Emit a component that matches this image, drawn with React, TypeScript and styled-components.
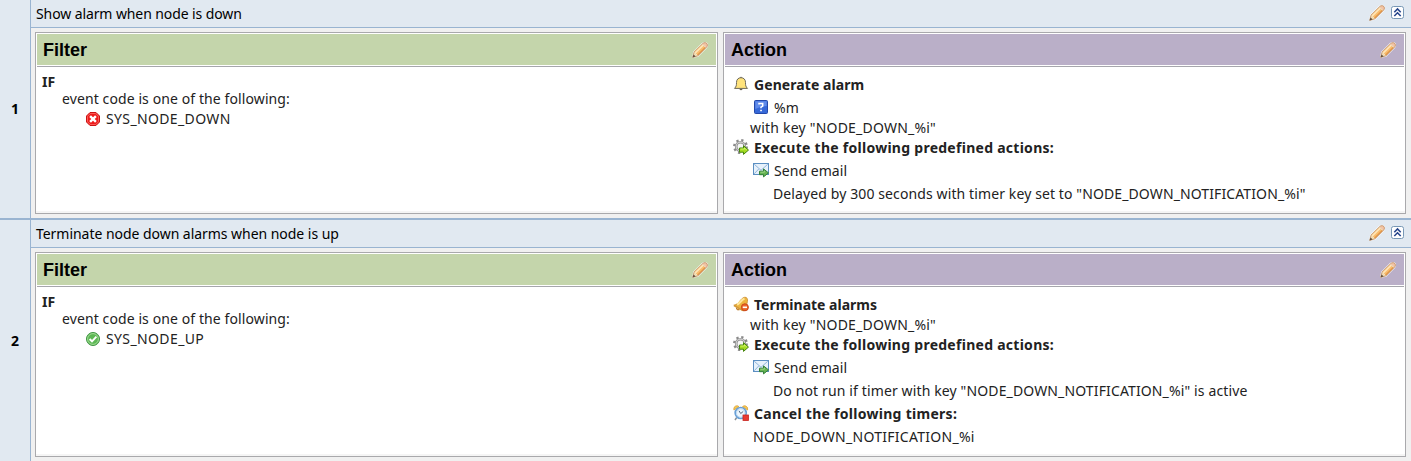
import React from 'react';
import styled, { createGlobalStyle } from 'styled-components';

const Global = createGlobalStyle`
  html, body { margin: 0; padding: 0; background: #f0f0f0; }
  body { font-family: "Noto Sans", "Open Sans", sans-serif; font-size: 14px; color: #222; overflow: hidden; }
  svg { display: block; flex: none; }
`;

const Page = styled.div`
  display: flex;
  flex-direction: column;
  width: 1411px;
  height: 461px;
  background: #f0f0f0;
`;

const RuleNumber = styled.div`
  box-sizing: border-box;
  width: 31px;
  flex: none;
  display: flex;
  align-items: center;
  justify-content: center;
  background: #e1e9f1;
  border-right: 1px solid #99b4d1;
  color: #000;
  font-weight: 700;
`;

const Rule = styled.section<{ $height: number }>`
  display: flex;
  box-sizing: border-box;
  height: ${(p) => p.$height}px;
  & + & { border-top: 2px solid #99b4d1; }
  &:first-child ${RuleNumber} { padding-bottom: 2px; }
`;

const RuleMain = styled.div`
  flex: 1;
  min-width: 0;
  display: flex;
  flex-direction: column;
`;

const RuleHeader = styled.header`
  box-sizing: border-box;
  height: 28px;
  flex: none;
  display: flex;
  align-items: center;
  justify-content: space-between;
  padding: 0 6px 0 5px;
  background: #e1e9f1;
  border-bottom: 1px solid #99b4d1;
  color: #000;
`;

const Tools = styled.div`
  display: flex;
  align-items: center;
  gap: 5px;
  padding: 0 1px 1px 0;
`;

const Panels = styled.div`
  flex: 1;
  display: flex;
  gap: 5px;
  padding: 4px 5px 4px 4px;
`;

const Panel = styled.div`
  box-sizing: border-box;
  flex: 1;
  min-width: 0;
  background: #fff;
  border: 1px solid #a9a9ac;
  box-shadow: inset 0 -2px 0 #f5f5f5;
`;

const PanelHeader = styled.div<{ $color: string }>`
  box-sizing: border-box;
  height: 34px;
  display: flex;
  align-items: center;
  justify-content: space-between;
  padding: 0 8px 0 6px;
  border: 1px solid #fff;
  border-bottom: 0;
  background: ${(p) => p.$color};
  box-shadow: inset 0 -1px 0 #a6a6ac, inset 0 -2px 0 #fff;
  color: #000;
  font: bold 18px "Liberation Sans", Arial, sans-serif;
  svg { margin-bottom: 2px; }
`;

const PanelBody = styled.div`
  padding-top: 6px;
`;

const Line = styled.div<{ $height: number; $indent: number; $bold?: boolean }>`
  display: flex;
  align-items: center;
  gap: 5px;
  height: ${(p) => p.$height}px;
  padding-left: ${(p) => p.$indent}px;
  font-weight: ${(p) => (p.$bold ? 700 : 400)};
`;

const Label = styled.span<{ $tracking?: number }>`
  line-height: 17px;
  white-space: pre;
  letter-spacing: ${(p) => p.$tracking ?? 0}px;
`;

const Pencil = () => (
  <svg width="16" height="16" viewBox="0 0 16 16">
    <path d="M.3 15.7 1.7 9.8 10.4 1Q13.2-.6 15.1 1 16.7 3 15 5.5L6.3 14.2Z" fill="#fff" stroke="#fff" strokeOpacity=".7" strokeWidth="1" />
    <path d="M2.1 10 10.2 2 14 5.7 6 13.8Z" fill="#f9bd6e" />
    <path d="M3.2 10.8 11.3 2.8" stroke="#ffe6b8" strokeWidth="1.8" />
    <path d="M5.5 13.1 13.5 5.1" stroke="#e3974a" strokeWidth="1.2" />
    <path d="M10.2 2 11.3 1Q13.3 0 14.9 1.4 16.1 3 15 4.7L14 5.7Z" fill="#f3c4a4" />
    <path d="M10.4 2.1 13.9 5.6" stroke="#e8dcc4" />
    <path d="M2.1 10 6 13.8.6 15.5Z" fill="#f0dab0" />
    <path d="M1.5 12.6 3.6 14.6.5 15.6Z" fill="#3a3a3a" />
    <path d="M.7 15.4 2 10.1 11.3 1Q13.3 0 14.9 1.4 16 3 15 4.7L5.9 13.9Z" fill="none" stroke="#a9713f" strokeWidth=".6" />
  </svg>
);

const Collapse = () => (
  <svg width="14" height="14" viewBox="0 0 14 14">
    <rect x="1.5" y=".5" width="12" height="12" rx="2" fill="#fff" stroke="#7898b5" />
    <path d="M4.3 6.2 7.5 3 10.7 6.2M4.3 10 7.5 6.8 10.7 10" fill="none" stroke="#27468c" strokeWidth="1.6" />
  </svg>
);

const ErrorIcon = () => (
  <svg width="16" height="16" viewBox="0 0 16 16">
    <path d="M5 1.5H11L14.5 5V11L11 14.5H5L1.5 11V5Z" fill="#ed1c1c" stroke="#c91313" />
    <path d="M5.3 2.5H10.7L13.5 5.3V10.7L10.7 13.5H5.3L2.5 10.7V5.3Z" fill="none" stroke="#ff6b66" strokeWidth=".8" />
    <path d="M5.1 5.1 10.9 10.9M10.9 5.1 5.1 10.9" stroke="#fff" strokeWidth="2.4" />
  </svg>
);

const OkIcon = () => (
  <svg width="16" height="16" viewBox="0 0 16 16">
    <circle cx="8" cy="8" r="6.5" fill="#5cb854" stroke="#3d9442" />
    <circle cx="8" cy="8" r="5.4" fill="none" stroke="#a2da96" strokeWidth="1" />
    <path d="M4.6 8 7 10.3 11.4 5.7" fill="none" stroke="#fff" strokeWidth="1.9" />
  </svg>
);

const Bell = () => (
  <svg width="16" height="16" viewBox="0 0 16 16">
    <path d="M8 .8V2M1.5 12.4C3.3 10.7 3.5 9.3 3.5 6.5 3.5 3.5 5.3 1.7 8 1.7S12.5 3.5 12.5 6.5C12.5 9.3 12.7 10.7 14.5 12.4Z" fill="#ffe37c" stroke="#6d6859" strokeWidth="1" strokeLinejoin="round" />
    <path d="M6.3 12.9Q8 15.6 9.7 12.9Z" fill="#655d4d" />
  </svg>
);

const Help = () => (
  <svg width="16" height="16" viewBox="0 0 16 16">
    <rect x="1.5" y="1.5" width="13" height="13" rx="1" fill="#3668d8" stroke="#2348a9" />
    <path d="M2.3 2.3H13.7V7Q8 7 2.3 10Z" fill="#608bea" />
    <path d="M6 5.6V4.6H9.7V7.1L8 8.2V9.3" fill="none" stroke="#fff" strokeWidth="1.5" />
    <path d="M7.2 10.7H8.9V12.2H7.2Z" fill="#fff" />
  </svg>
);

const Gear = () => (
  <svg width="16" height="16" viewBox="0 0 16 16">
    <circle cx="7.5" cy="7.5" r="6.2" fill="none" stroke="#8a8a8a" strokeWidth="2.5" strokeDasharray="2.2 2.67" />
    <circle cx="7.5" cy="7.5" r="4.3" fill="#f6f6f6" stroke="#8b8b8b" strokeWidth="2.6" />
    <circle cx="7.5" cy="7.5" r="4.3" fill="none" stroke="#cfcfcf" strokeWidth="1.2" />
    <path d="M6.5 9H10.5V6.7L15.5 11.1 10.5 15.4V13.2H6.5Z" fill="#a4dc22" stroke="#46870c" />
    <path d="M7.5 10H11.5V9L13.8 11" fill="none" stroke="#dcfa7a" strokeWidth=".8" />
  </svg>
);

const Mail = () => (
  <svg width="16" height="16" viewBox="0 0 16 16">
    <rect x=".5" y="1.5" width="15" height="11" fill="#e7f1fb" stroke="#5b8fc2" />
    <path d="M1.2 2.2 8 8.3 14.8 2.2M1.2 11.8 5.7 7M14.8 11.8 10.5 7" fill="none" stroke="#91b5da" />
    <path d="M6.5 9.2H10.5V6.9L15.5 10.9 10.5 14.9V12.7H6.5Z" fill="#67b352" stroke="#34803a" />
    <path d="M7.4 10.2H11.4V8.8" fill="none" stroke="#a8dc91" strokeWidth=".8" />
  </svg>
);

const BellOff = () => (
  <svg width="16" height="16" viewBox="0 0 16 16">
    <path d="M.8 9.2C3.6 8.5 5 7.5 7 4.8 9 2.2 11 .8 13 1.4 15 2.2 14.8 4.8 13.9 7.7 13.1 10.2 13 11.7 13.4 14L10.3 14.8Z" fill="#edb43f" stroke="#c98a2c" strokeWidth=".8" strokeLinejoin="round" />
    <path d="M4 8.5C7 7.5 8.3 3.5 11.5 2.8" fill="none" stroke="#ffe79b" strokeWidth="2.2" />
    <path d="M1 9.7 10 14.7" stroke="#d39a3a" strokeWidth="1.5" />
    <path d="M3.3 11.8Q3.6 14.8 6.5 13.8" fill="#d89530" stroke="#b87520" />
    <circle cx="11.9" cy="11.3" r="3.5" fill="#ed692b" stroke="#cb461a" />
    <path d="M9.8 11.3H14" stroke="#fff" strokeWidth="1.6" />
  </svg>
);

const Clock = () => (
  <svg width="16" height="16" viewBox="0 0 16 16">
    <path d="M.9 5Q.2 2 2.7 1 4.7.2 6 1.7ZM14.6 5Q15.3 2 12.8 1 10.8.2 9.5 1.7Z" fill="#f4c956" stroke="#dca137" strokeWidth=".8" />
    <path d="M3.7 12.5 2 15M11.7 12.5 13.5 15" stroke="#8b9298" strokeWidth="1.5" />
    <circle cx="7.7" cy="8" r="5.5" fill="#eef7fe" stroke="#6aa0d6" strokeWidth="1.7" />
    <circle cx="7.7" cy="8" r="4.2" fill="none" stroke="#b7d5ee" strokeWidth=".8" />
    <path d="M6 5.8 7.7 8.5 10.2 6.5" fill="none" stroke="#51677f" />
    <rect x="10" y="10" width="5.5" height="5.5" fill="#e83b32" stroke="#c72520" strokeWidth=".8" />
  </svg>
);

type LineData = { text: string; height: number; indent: number; icon?: React.ReactNode; bold?: boolean; tracking?: number };
type RuleData = { number: string; title: string; tracking: number; height: number; filter: LineData[]; action: LineData[] };

const rules: RuleData[] = [
  {
    number: '1', title: 'Show alarm when node is down', tracking: -0.1, height: 218,
    filter: [
      { text: 'IF', height: 17, indent: 6, bold: true },
      { text: 'event code is one of the following:', height: 17, indent: 26, tracking: 0.1 },
      { text: 'SYS_NODE_DOWN', height: 23, indent: 49, icon: <ErrorIcon />, tracking: 0.36 },
    ],
    action: [
      { text: 'Generate alarm', height: 22, indent: 9, icon: <Bell />, bold: true, tracking: 0.07 },
      { text: '%m', height: 24, indent: 29, icon: <Help /> },
      { text: 'with key "NODE_DOWN_%i"', height: 16, indent: 26, tracking: 0.21 },
      { text: 'Execute the following predefined actions:', height: 24, indent: 9, icon: <Gear />, bold: true, tracking: 0.27 },
      { text: 'Send email', height: 22, indent: 29, icon: <Mail />, tracking: 0.05 },
      { text: 'Delayed by 300 seconds with timer key set to "NODE_DOWN_NOTIFICATION_%i"', height: 24, indent: 49, tracking: 0.11 },
    ],
  },
  {
    number: '2', title: 'Terminate node down alarms when node is up', tracking: -0.04, height: 243,
    filter: [
      { text: 'IF', height: 17, indent: 6, bold: true },
      { text: 'event code is one of the following:', height: 17, indent: 26, tracking: 0.1 },
      { text: 'SYS_NODE_UP', height: 23, indent: 49, icon: <OkIcon />, tracking: 0.38 },
    ],
    action: [
      { text: 'Terminate alarms', height: 22, indent: 9, icon: <BellOff />, bold: true },
      { text: 'with key "NODE_DOWN_%i"', height: 18, indent: 26, tracking: 0.21 },
      { text: 'Execute the following predefined actions:', height: 22, indent: 9, icon: <Gear />, bold: true, tracking: 0.27 },
      { text: 'Send email', height: 24, indent: 29, icon: <Mail />, tracking: 0.05 },
      { text: 'Do not run if timer with key "NODE_DOWN_NOTIFICATION_%i" is active', height: 22, indent: 49, tracking: 0.13 },
      { text: 'Cancel the following timers:', height: 24, indent: 9, icon: <Clock />, bold: true, tracking: 0.28 },
      { text: 'NODE_DOWN_NOTIFICATION_%i', height: 22, indent: 29, tracking: 0.28 },
    ],
  },
];

const PanelView = ({ title, color, lines }: { title: string; color: string; lines: LineData[] }) => (
  <Panel>
    <PanelHeader $color={color}>{title}<Pencil /></PanelHeader>
    <PanelBody>
      {lines.map((l) => (
        <Line key={l.text} $height={l.height} $indent={l.indent} $bold={l.bold}>
          {l.icon}
          <Label $tracking={l.tracking}>{l.text}</Label>
        </Line>
      ))}
    </PanelBody>
  </Panel>
);

export default function App() {
  return (
    <>
      <Global />
      <Page>
        {rules.map((r) => (
          <Rule key={r.number} $height={r.height}>
            <RuleNumber>{r.number}</RuleNumber>
            <RuleMain>
              <RuleHeader>
                <Label $tracking={r.tracking}>{r.title}</Label>
                <Tools><Pencil /><Collapse /></Tools>
              </RuleHeader>
              <Panels>
                <PanelView title="Filter" color="#c4d5ab" lines={r.filter} />
                <PanelView title="Action" color="#baafc8" lines={r.action} />
              </Panels>
            </RuleMain>
          </Rule>
        ))}
      </Page>
    </>
  );
}
